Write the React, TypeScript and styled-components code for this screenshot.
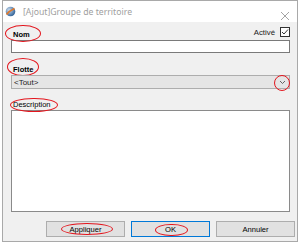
import React from 'react';
import styled, { createGlobalStyle } from 'styled-components';

const GlobalStyle = createGlobalStyle`
  html, body {
    margin: 0;
    padding: 0;
    background: #ffffff;
    width: 300px;
    height: 242px;
    overflow: hidden;
  }
`;

interface MarkProps {
  $t: number;
  $r: number;
  $b: number;
  $l: number;
}

const Window = styled.div`
  box-sizing: border-box;
  width: 296px;
  height: 242px;
  margin-left: 2px;
  border: 1px solid #a9a9a9;
  background: #f0f0f0;
  display: flex;
  flex-direction: column;
  font-family: 'Liberation Sans', Arial, sans-serif;
  color: #000;
`;

const TitleBar = styled.div`
  height: 21px;
  background: #ffffff;
  display: flex;
  align-items: center;
  padding-left: 2px;
  padding-right: 4px;
`;

const Title = styled.span`
  flex: 1;
  margin-left: 7px;
  font-family: 'Noto Sans', 'Open Sans', sans-serif;
  font-size: 8.7px;
  color: #a0a0a0;
  margin-top: 1px;
`;

const CloseBtn = styled.div`
  width: 10px;
  height: 10px;
  margin-right: 3px;
  margin-top: 1px;
`;

const Form = styled.div`
  flex: 1;
  display: flex;
  flex-direction: column;
  padding: 0 7px 0 8px;
`;

const HeaderRow = styled.div`
  height: 18px;
  display: flex;
  justify-content: space-between;
  align-items: flex-end;
`;

const Label = styled.span<{ $bold?: boolean; $mt?: number }>`
  position: relative;
  align-self: flex-start;
  font-size: 7.5px;
  line-height: 9px;
  font-weight: ${p => (p.$bold ? 700 : 400)};
  margin-left: 2px;
  margin-top: ${p => p.$mt ?? 0}px;
  margin-bottom: 1px;
`;

const HeaderLabel = styled(Label)`
  align-self: flex-end;
  margin-bottom: 1px;
`;

const Mark = styled.span<MarkProps>`
  position: absolute;
  top: ${p => p.$t}px;
  right: ${p => p.$r}px;
  bottom: ${p => p.$b}px;
  left: ${p => p.$l}px;
  border: 1.2px solid #e3161e;
  border-radius: 50%;
  pointer-events: none;
`;

const ActiveGroup = styled.div`
  display: flex;
  align-items: center;
  gap: 5px;
  margin-bottom: 3px;
  font-size: 7.8px;
  color: #1a1a1a;
`;

const CheckBox = styled.div`
  box-sizing: border-box;
  width: 10px;
  height: 10px;
  border: 1px solid #333;
  background: #fff;
  display: flex;
  align-items: center;
  justify-content: center;
`;

const TextInput = styled.div`
  box-sizing: border-box;
  height: 13px;
  border: 1px solid #7a7a7a;
  background: #ffffff;
`;

const Combo = styled.div`
  position: relative;
  box-sizing: border-box;
  height: 14px;
  border: 1px solid #adadad;
  background: #e5e5e5;
  display: flex;
  align-items: center;
  justify-content: space-between;
  padding: 0 3px 0 2px;
  font-size: 8px;
  color: #222;
`;

const ArrowMark = styled.span`
  position: absolute;
  right: -1px;
  top: -1px;
  width: 14px;
  height: 14px;
  border: 1.2px solid #e3161e;
  border-radius: 50%;
`;

const TextArea = styled.div`
  flex: 1;
  box-sizing: border-box;
  border: 1px solid #8a8a8a;
  background: #ffffff;
`;

const Footer = styled.div`
  height: 29px;
  display: flex;
  justify-content: flex-end;
  align-items: flex-start;
  gap: 6px;
  padding: 9px 2px 0 0;
  box-sizing: border-box;
`;

const Button = styled.div<{ $default?: boolean }>`
  position: relative;
  box-sizing: border-box;
  width: 79px;
  height: 16px;
  border: 1px solid ${p => (p.$default ? '#0078d7' : '#adadad')};
  background: #e1e1e1;
  font-size: 7.6px;
  display: flex;
  align-items: center;
  justify-content: center;
`;

const BtnText = styled.span`
  position: relative;
  line-height: 9px;
`;

const AppIcon = () => (
  <svg width="11" height="11" viewBox="0 0 11 11">
    <defs>
      <radialGradient id="g" cx="0.35" cy="0.35" r="0.7">
        <stop offset="0" stopColor="#c9dcef" />
        <stop offset="1" stopColor="#2f5f94" />
      </radialGradient>
    </defs>
    <circle cx="5.5" cy="5.5" r="4.8" fill="url(#g)" />
    <path d="M1.5 8.5 Q4 5 9.5 2.5" stroke="#e0782a" strokeWidth="1.6" fill="none" />
  </svg>
);

const App: React.FC = () => (
  <>
    <GlobalStyle />
    <Window>
      <TitleBar>
        <AppIcon />
        <Title>[Ajout]Groupe de territoire</Title>
        <CloseBtn>
          <svg width="10" height="10" viewBox="0 0 10 10">
            <path d="M1 1 L9 9 M9 1 L1 9" stroke="#9a9a9a" strokeWidth="0.9" />
          </svg>
        </CloseBtn>
      </TitleBar>
      <Form>
        <HeaderRow>
          <HeaderLabel $bold>
            Nom
            <Mark $t={-5} $r={-11} $b={-3} $l={-8} />
          </HeaderLabel>
          <ActiveGroup>
            <span>Activé</span>
            <CheckBox>
              <svg width="8" height="8" viewBox="0 0 8 8">
                <path d="M1 4 L3 6 L7 1.5" stroke="#222" strokeWidth="0.9" fill="none" />
              </svg>
            </CheckBox>
          </ActiveGroup>
        </HeaderRow>
        <TextInput />
        <Label $bold $mt={12}>
          Flotte
          <Mark $t={-7} $r={-6} $b={-2} $l={-6} />
        </Label>
        <Combo>
          <span>&lt;Tout&gt;</span>
          <svg width="7" height="5" viewBox="0 0 7 5">
            <path d="M1 1 L3.5 3.5 L6 1" stroke="#555" strokeWidth="0.9" fill="none" />
          </svg>
          <ArrowMark />
        </Combo>
        <Label $mt={11}>
          Description
          <Mark $t={-2.5} $r={-7} $b={-3} $l={-3.5} />
        </Label>
        <TextArea />
      </Form>
      <Footer>
        <Button>
          <BtnText>
            Appliquer
            <Mark $t={-2} $r={-11} $b={-1} $l={-8} />
          </BtnText>
        </Button>
        <Button $default>
          <BtnText>
            OK
            <Mark $t={-1} $r={-12} $b={-2.5} $l={-10} />
          </BtnText>
        </Button>
        <Button>
          <BtnText>Annuler</BtnText>
        </Button>
      </Footer>
    </Window>
  </>
);

export default App;
